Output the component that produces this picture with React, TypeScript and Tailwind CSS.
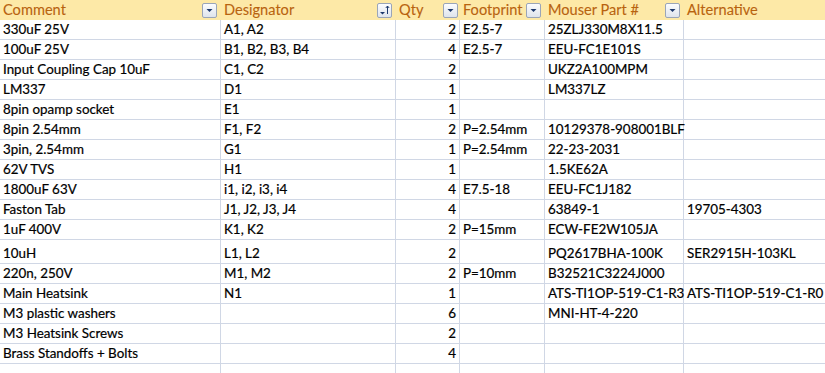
import React from 'react';

type Row = {
  comment: string;
  designator: string;
  qty: number;
  footprint: string;
  mouser: string;
  alt: string;
  tall?: boolean;
};

const rows: Row[] = [
  { comment: '330uF 25V', designator: 'A1, A2', qty: 2, footprint: 'E2.5-7', mouser: '25ZLJ330M8X11.5', alt: '' },
  { comment: '100uF 25V', designator: 'B1, B2, B3, B4', qty: 4, footprint: 'E2.5-7', mouser: 'EEU-FC1E101S', alt: '' },
  { comment: 'Input Coupling Cap 10uF', designator: 'C1, C2', qty: 2, footprint: '', mouser: 'UKZ2A100MPM', alt: '' },
  { comment: 'LM337', designator: 'D1', qty: 1, footprint: '', mouser: 'LM337LZ', alt: '' },
  { comment: '8pin opamp socket', designator: 'E1', qty: 1, footprint: '', mouser: '', alt: '' },
  { comment: '8pin 2.54mm', designator: 'F1, F2', qty: 2, footprint: 'P=2.54mm', mouser: '10129378-908001BLF', alt: '' },
  { comment: '3pin, 2.54mm', designator: 'G1', qty: 1, footprint: 'P=2.54mm', mouser: '22-23-2031', alt: '' },
  { comment: '62V TVS', designator: 'H1', qty: 1, footprint: '', mouser: '1.5KE62A', alt: '' },
  { comment: '1800uF 63V', designator: 'i1, i2, i3, i4', qty: 4, footprint: 'E7.5-18', mouser: 'EEU-FC1J182', alt: '' },
  { comment: 'Faston Tab', designator: 'J1, J2, J3, J4', qty: 4, footprint: '', mouser: '63849-1', alt: '19705-4303' },
  { comment: '1uF 400V', designator: 'K1, K2', qty: 2, footprint: 'P=15mm', mouser: 'ECW-FE2W105JA', alt: '' },
  { comment: '10uH', designator: 'L1, L2', qty: 2, footprint: '', mouser: 'PQ2617BHA-100K', alt: 'SER2915H-103KL', tall: true },
  { comment: '220n, 250V', designator: 'M1, M2', qty: 2, footprint: 'P=10mm', mouser: 'B32521C3224J000', alt: '' },
  { comment: 'Main Heatsink', designator: 'N1', qty: 1, footprint: '', mouser: 'ATS-TI1OP-519-C1-R3', alt: 'ATS-TI1OP-519-C1-R0' },
  { comment: 'M3 plastic washers', designator: '', qty: 6, footprint: '', mouser: 'MNI-HT-4-220', alt: '' },
  { comment: 'M3 Heatsink Screws', designator: '', qty: 2, footprint: '', mouser: '', alt: '' },
  { comment: 'Brass Standoffs + Bolts', designator: '', qty: 4, footprint: '', mouser: '', alt: '' },
];

const cols = ['w-[221px]', 'w-[175px]', 'w-[64px]', 'w-[85px]', 'w-[139px]', 'w-[160px]'];

function FilterButton({ sorted }: { sorted?: boolean }) {
  return (
    <div className="w-[15px] h-[15px] shrink-0 rounded-[2px] border border-[#9aa5b8] bg-gradient-to-b from-[#fbfcfe] to-[#dfe4ec] flex items-center justify-center">
      {sorted ? (
        <svg width="13" height="13" viewBox="0 0 13 13">
          <path d="M2 8 L7 8 L4.5 10.5 Z" fill="#1e3a6e" />
          <path d="M9.5 2 L9.5 10" stroke="#1e3a6e" strokeWidth="1" />
          <path d="M7.8 4 L9.5 2 L11.2 4" stroke="#1e3a6e" strokeWidth="1" fill="none" />
        </svg>
      ) : (
        <svg width="13" height="13" viewBox="0 0 13 13">
          <path d="M3.5 5 L9.5 5 L6.5 8 Z" fill="#1e3a6e" />
        </svg>
      )}
    </div>
  );
}

function HeaderCell({ label, width, sorted }: { label: string; width: string; sorted?: boolean }) {
  return (
    <div className={`${width} shrink-0 h-[20px] flex items-center justify-between pl-[3px] pr-[4px]`}>
      <span className="text-[#b8630f] leading-[18px]">{label}</span>
      <FilterButton sorted={sorted} />
    </div>
  );
}

function Cell({ children, width, right, tall }: { children?: React.ReactNode; width: string; right?: boolean; tall?: boolean }) {
  return (
    <div
      className={`${width} shrink-0 ${tall ? 'h-[24px]' : 'h-[20px]'} border-r border-b border-[#d0d7e5] flex items-end pb-[1px] px-[3px] whitespace-nowrap ${right ? 'justify-end' : ''}`}
    >
      <span className="leading-[18px]">{children}</span>
    </div>
  );
}

export default function App() {
  return (
    <div className="w-[825px] h-[373px] overflow-hidden bg-white text-black text-[13.4px] [-webkit-text-stroke:0.2px_black] font-['Lato','Carlito','Liberation_Sans',sans-serif]">
      <div className="flex bg-[#fde9a7] w-max text-[14.6px] [-webkit-text-stroke:0.1px_#b8630f]">
        <HeaderCell label="Comment" width={cols[0]} />
        <HeaderCell label="Designator" width={cols[1]} sorted />
        <div className={`${cols[2]} shrink-0 h-[20px] flex items-center justify-between pl-[3px] pr-[2px]`}>
          <span className="text-[#b8630f] leading-[18px]">Qty</span>
          <FilterButton />
        </div>
        <HeaderCell label="Footprint" width={cols[3]} />
        <HeaderCell label="Mouser Part #" width={cols[4]} />
        <HeaderCell label="Alternative" width={cols[5]} />
      </div>
      {rows.map((r) => (
        <div key={r.comment} className="flex w-max">
          <Cell width={cols[0]} tall={r.tall}>{r.comment}</Cell>
          <Cell width={cols[1]} tall={r.tall}>{r.designator}</Cell>
          <Cell width={cols[2]} tall={r.tall} right>{r.qty}</Cell>
          <Cell width={cols[3]} tall={r.tall}>{r.footprint}</Cell>
          <Cell width={cols[4]} tall={r.tall}>{r.mouser}</Cell>
          <Cell width={cols[5]} tall={r.tall}>{r.alt}</Cell>
        </div>
      ))}
      <div className="flex w-max">
        {cols.map((c) => (
          <Cell key={c} width={c} />
        ))}
      </div>
    </div>
  );
}
